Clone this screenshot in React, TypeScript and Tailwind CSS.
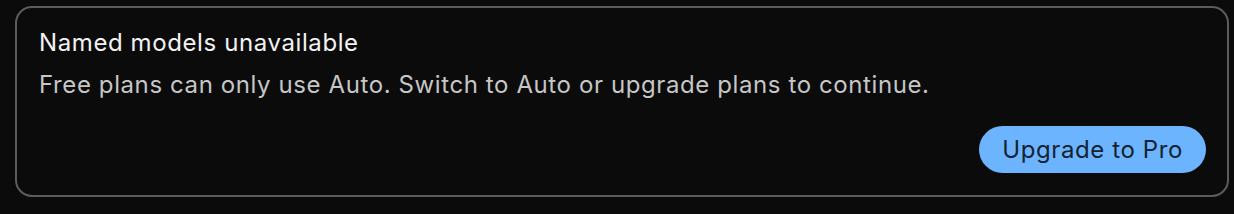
import React from 'react';

const App: React.FC = () => {
  return (
    <div className="h-[214px] w-[1234px] bg-[#0b0b0b] pt-[6px] pl-[15px] pr-[5px] font-['Inter',sans-serif] tracking-[0.6px]">
      <div className="flex h-[191px] flex-col rounded-[17px] border-2 border-[#5c5c5c] pl-[22px] pr-[21px] pt-[19px] pb-[22px]">
        <p className="text-[24px] leading-[32px] text-[#f2f2f2]">Named models unavailable</p>
        <p className="mt-[10px] text-[24px] leading-[32px] text-[#c6c6c6]">
          Free plans can only use Auto. Switch to Auto or upgrade plans to continue.
        </p>
        <div className="mt-auto flex justify-end">
          <button className="h-[47px] rounded-full bg-[#6cb5fe] px-[23px] text-[24px] text-[#142233]">
            Upgrade to Pro
          </button>
        </div>
      </div>
    </div>
  );
};

export default App;
